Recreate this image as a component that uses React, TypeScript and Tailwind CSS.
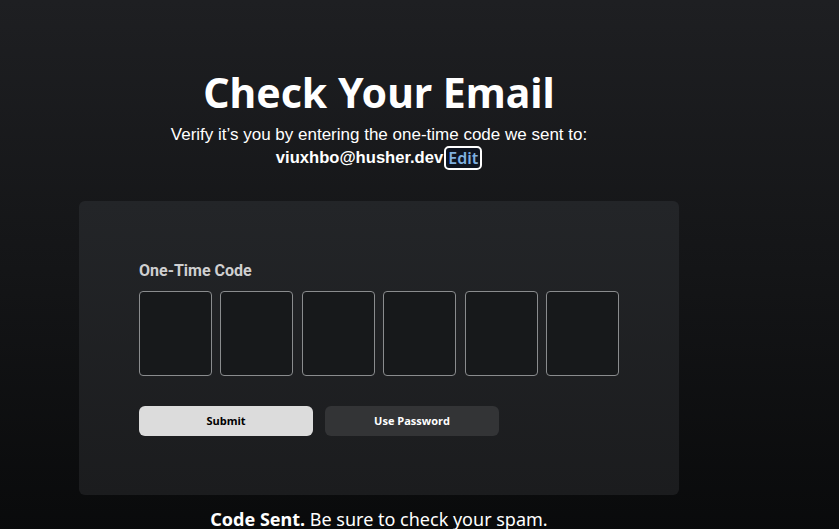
import React from 'react';

const CodeBox = () => (
  <div className="h-[85px] w-[73px] rounded-[4px] border border-[#8a8c8e] bg-[#17191b]" />
);

const App = () => {
  const slots = [0, 1, 2, 3, 4, 5];

  return (
    <div className="min-h-[529px] w-full bg-gradient-to-b from-[#1e1f22] via-[#141517] to-[#090a0b] pb-2">
      <div className="ml-[79px] flex w-[600px] flex-col items-center pt-[66px]">
        <h1 className="font-['Noto_Sans',sans-serif] text-[41px] font-bold leading-[52px] text-white">
          Check Your Email
        </h1>
        <p className="mt-[6px] font-['Liberation_Sans',Arial,sans-serif] text-[17px] leading-[22px] text-white">
          Verify it’s you by entering the one-time code we sent to:
        </p>
        <div className="flex items-center font-['Liberation_Sans',Arial,sans-serif] text-[16.6px] font-bold leading-[22px] text-white">
          <span>viuxhbo@husher.dev</span>
          <button className="ml-[1px] rounded-[5px] border-2 border-white bg-[#0e1420] px-[2px] font-['Noto_Sans',sans-serif] text-[16px] font-semibold leading-[20px] text-[#7fb0e0]">
            Edit
          </button>
        </div>

        <div className="mt-[31px] w-[600px] rounded-[6px] bg-gradient-to-b from-[#232528] to-[#1b1c1e] px-[60px] pb-[59px] pt-[60px]">
          <label className="block font-['Roboto',sans-serif] text-[16px] font-bold leading-[20px] text-[#cfcfd0]">
            One-Time Code
          </label>
          <div className="mt-[10px] flex w-[480px] justify-between">
            {slots.map((i) => (
              <CodeBox key={i} />
            ))}
          </div>
          <div className="mt-[30px] flex gap-[12px]">
            <button className="h-[30px] w-[174px] rounded-[6px] bg-[#dcdcdc] font-['Open_Sans',sans-serif] text-[11px] font-bold text-black">
              Submit
            </button>
            <button className="h-[30px] w-[174px] rounded-[6px] bg-[#333436] font-['Open_Sans',sans-serif] text-[11px] font-bold text-white">
              Use Password
            </button>
          </div>
        </div>

        <p className="mt-[12px] font-['Noto_Sans',sans-serif] text-[18px] leading-[24px] text-white">
          <span className="font-bold">Code Sent.</span> Be sure to check your spam.
        </p>
      </div>
    </div>
  );
};

export default App;
